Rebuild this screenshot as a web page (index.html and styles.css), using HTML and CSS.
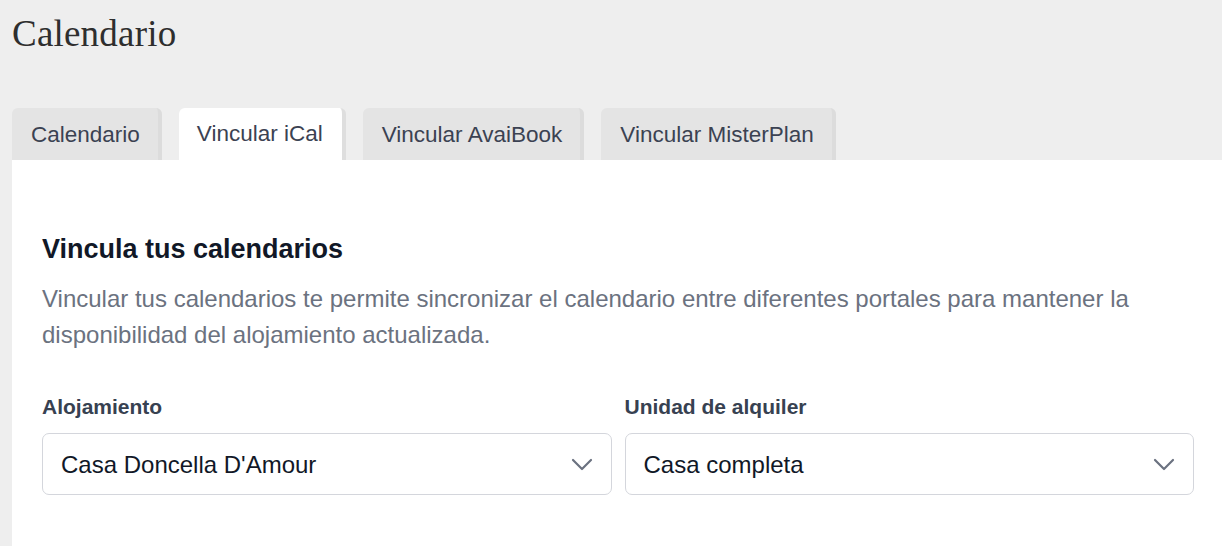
FILE: index.html
```html
<!DOCTYPE html>
<html lang="es">
<head>
<meta charset="utf-8">
<title>Calendario</title>
<link rel="stylesheet" href="styles.css">
</head>
<body>
<div class="page">
  <h1 class="page-title">Calendario</h1>
  <nav class="tabs">
    <div class="tab">Calendario</div>
    <div class="tab active">Vincular iCal</div>
    <div class="tab">Vincular AvaiBook</div>
    <div class="tab">Vincular MisterPlan</div>
  </nav>
  <section class="panel">
    <h2 class="panel-title">Vincula tus calendarios</h2>
    <p class="panel-text">Vincular tus calendarios te permite sincronizar el calendario entre diferentes portales para mantener la disponibilidad del alojamiento actualizada.</p>
    <div class="fields">
      <div class="field">
        <label class="field-label">Alojamiento</label>
        <div class="select">
          <span class="select-value">Casa Doncella D'Amour</span>
          <svg class="chevron" width="22" height="14" viewBox="0 0 22 14"><path d="M2 2 L11 11 L20 2" fill="none" stroke="#6b7280" stroke-width="2.2" stroke-linecap="round" stroke-linejoin="round"/></svg>
        </div>
      </div>
      <div class="field">
        <label class="field-label">Unidad de alquiler</label>
        <div class="select">
          <span class="select-value">Casa completa</span>
          <svg class="chevron" width="22" height="14" viewBox="0 0 22 14"><path d="M2 2 L11 11 L20 2" fill="none" stroke="#6b7280" stroke-width="2.2" stroke-linecap="round" stroke-linejoin="round"/></svg>
        </div>
      </div>
    </div>
  </section>
</div>
</body>
</html>
```
FILE: styles.css
```css
html, body {
  margin: 0;
  padding: 0;
  background: #eeeeee;
  height: 100%;
  overflow: hidden;
}
.page {
  padding-left: 12px;
  font-family: "Liberation Sans", Arial, sans-serif;
}
.page-title {
  margin: 0;
  padding-top: 13px;
  height: 108px;
  box-sizing: border-box;
  font-family: "Liberation Serif", "Times New Roman", serif;
  font-weight: normal;
  font-size: 37px;
  line-height: 42px;
  letter-spacing: 0.2px;
  color: #2e2e2e;
}
.tabs {
  display: flex;
  gap: 17px;
  align-items: flex-end;
}
.tab {
  height: 52px;
  box-sizing: border-box;
  padding: 13px 18px 0 19px;
  background: #e4e4e4;
  border-right: 4px solid #dcdcdc;
  border-radius: 6px 6px 0 0;
  font-size: 22.5px;
  line-height: 28px;
  color: #3b4252;
  white-space: nowrap;
}
.tab.active {
  background: #ffffff;
  border-right-color: #dedede;
  padding-left: 18px;
  padding-right: 19px;
  padding-top: 12px;
}
.panel {
  background: #ffffff;
  padding: 72px 28px 60px 30px;
  min-height: 400px;
}
.panel-title {
  margin: 0;
  font-size: 27px;
  line-height: 34px;
  font-weight: bold;
  color: #111827;
}
.panel-text {
  margin: 15px 0 0 0;
  font-size: 24px;
  line-height: 36px;
  color: #6b7280;
}
.fields {
  margin-top: 42px;
  display: grid;
  grid-template-columns: 1fr 1fr;
  gap: 13px;
}
.field-label {
  display: block;
  font-size: 21px;
  line-height: 24px;
  font-weight: bold;
  color: #374151;
  margin-bottom: 14px;
}
.select {
  height: 62px;
  box-sizing: border-box;
  border: 1px solid #d4d6dc;
  border-radius: 7px;
  display: flex;
  align-items: center;
  justify-content: space-between;
  padding: 2px 18px 0 18px;
}
.select-value {
  font-size: 24px;
  color: #111827;
}
.chevron {
  display: block;
}
```
